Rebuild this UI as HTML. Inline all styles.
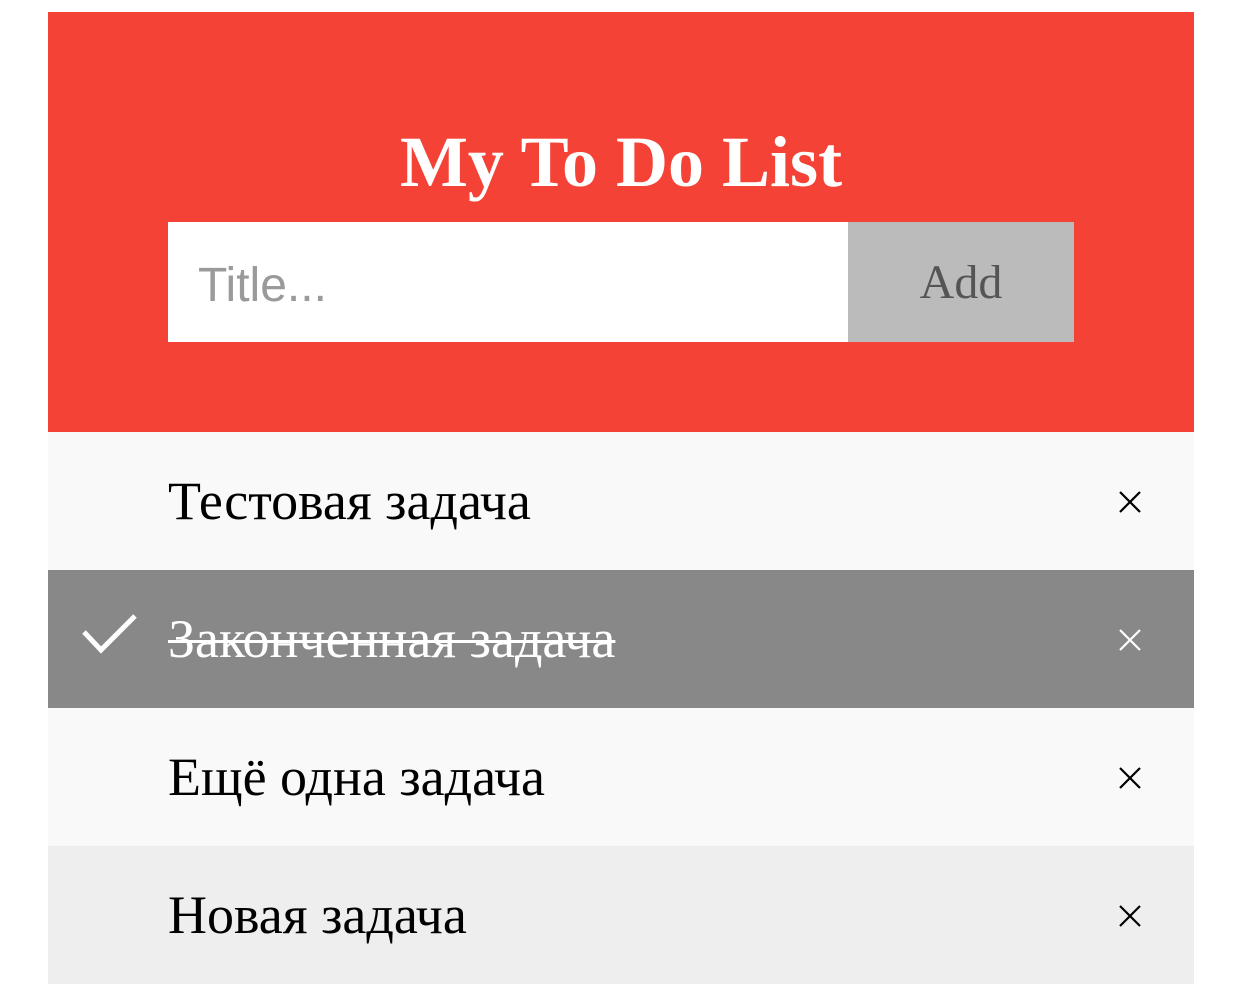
<!DOCTYPE html>
<html><head><meta charset="utf-8"><style>
*{margin:0;padding:0;box-sizing:border-box}
body{width:1242px;height:993px;background:#fff;position:relative;overflow:hidden;font-family:"Liberation Serif",serif}
.hdr{position:absolute;left:48px;top:12px;width:1146px;height:420px;background:#f44336}
.hdr h1{position:absolute;left:0;right:0;top:110px;text-align:center;color:#fff;font-size:72px;font-weight:bold;line-height:80px}
.inp{position:absolute;left:120px;top:210px;width:680px;height:120px;background:#fff;font-family:"Liberation Sans",sans-serif;font-size:48px;color:#9a9a9a;padding-left:30px;line-height:127px}
.btn{position:absolute;left:800px;top:210px;width:226px;height:120px;background:#bbb;color:#555;font-size:48px;text-align:center;line-height:122px}
.row{position:absolute;left:48px;width:1146px;height:138px;font-size:54px;line-height:138px;padding-left:120px;color:#000}
.row svg{position:absolute}
</style></head><body>
<div class="hdr"><h1>My To Do List</h1><div class="inp">Title...</div><div class="btn">Add</div></div>
<div class="row" style="top:432px;background:#f9f9f9">Тестовая задача<svg style="left:1071px;top:59px" width="22" height="22"><path d="M1 1L21 21M21 1L1 21" stroke="#000" stroke-width="2.2"/></svg></div>
<div class="row" style="top:570px;background:#888;color:#fff"><span style="text-decoration:line-through;text-decoration-thickness:3px">Законченная задача</span><svg style="left:30px;top:40px" width="60" height="50"><path d="M6 22L23 40L57 6" stroke="#fff" stroke-width="5" fill="none"/></svg><svg style="left:1071px;top:59px" width="22" height="22"><path d="M1 1L21 21M21 1L1 21" stroke="#fff" stroke-width="2.2"/></svg></div>
<div class="row" style="top:708px;background:#f9f9f9">Ещё одна задача<svg style="left:1071px;top:59px" width="22" height="22"><path d="M1 1L21 21M21 1L1 21" stroke="#000" stroke-width="2.2"/></svg></div>
<div class="row" style="top:846px;background:#eee">Новая задача<svg style="left:1071px;top:59px" width="22" height="22"><path d="M1 1L21 21M21 1L1 21" stroke="#000" stroke-width="2.2"/></svg></div>
</body></html>
